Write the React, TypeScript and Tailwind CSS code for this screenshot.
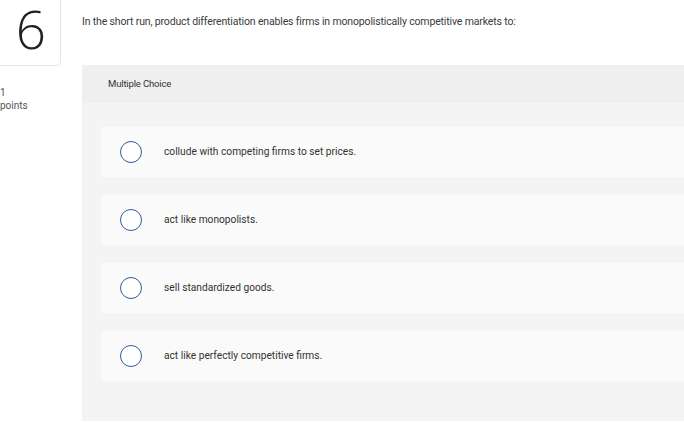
import React from 'react';

const options = [
  'collude with competing firms to set prices.',
  'act like monopolists.',
  'sell standardized goods.',
  'act like perfectly competitive firms.',
];

function Radio() {
  return (
    <span className="block w-[22px] h-[22px] shrink-0 rounded-full border-[1.5px] border-[#2f5f98] bg-white" />
  );
}

export default function App() {
  return (
    <div className="w-[684px] h-[444px] overflow-hidden bg-white font-['Roboto',sans-serif] text-[#333]">
      <div className="flex">
        {/* Left: question number + points */}
        <div className="w-[82px] shrink-0">
          <div className="flex h-[66px] w-[61px] items-center justify-end pr-[14px] pb-[6px] rounded-br-[4px] border-r border-b border-[#e6e6e6] bg-white">
            <span className="font-['Open_Sans',sans-serif] text-[53px] font-light leading-[1.1] text-[#222]">6</span>
          </div>
          <div className="mt-[20px] text-[10px] leading-[13px] text-[#555]">
            <div>1</div>
            <div>points</div>
          </div>
        </div>

        {/* Right: question body */}
        <div className="flex-1">
          <p className="pt-[14px] h-[65px] text-[10.5px] leading-[16px] tracking-[-0.15px] text-[#3a3a3a]">
            In the short run, product differentiation enables firms in monopolistically competitive markets to:
          </p>

          <div className="bg-[#f4f4f4] rounded-tl-[2px] pb-10">
            <div className="flex h-[38px] items-center bg-[#efefef] pl-[26px] text-[9.5px] tracking-[-0.15px] text-[#333]">
              Multiple Choice
            </div>
            <div className="flex flex-col gap-[18px] pt-6 pl-[19px]">
              {options.map((opt) => (
                <div key={opt} className="flex h-[50px] items-center bg-[#fafafa] pl-[19px]">
                  <Radio />
                  <span className="ml-[22px] text-[10.2px] text-[#333]">{opt}</span>
                </div>
              ))}
            </div>
          </div>
        </div>
      </div>
    </div>
  );
}
